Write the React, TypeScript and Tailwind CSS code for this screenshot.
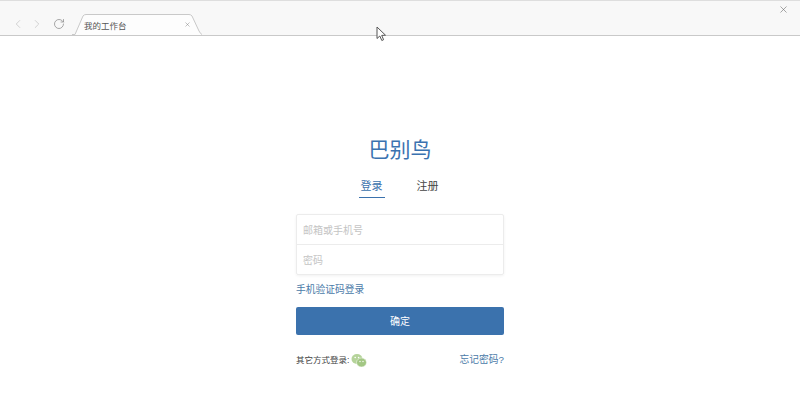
import { ChevronLeft, ChevronRight, RotateCw, X } from "lucide-react";

const cjk = "font-['Liberation_Sans','Noto_Sans_CJK_SC',sans-serif]";

function Tab() {
    return (
        <div className="relative h-[21px] w-[130px] shrink-0">
            {/* tab outline */}
            <svg className="absolute inset-0" width="130" height="21" viewBox="0 0 130 21" fill="none">
                <path d="M0 20.5 H3 L11 2 Q12 .5 14 .5 H117 Q119 .5 120 2 L127 17 Q129 20.5 130 20.5 V21 H0 Z" fill="#fdfdfd" />
                <path d="M0 20.5 H3 L11 2 Q12 .5 14 .5 H117 Q119 .5 120 2 L127 17 Q129 20.5 130 20.5" stroke="#c9c9c9" />
            </svg>
            <div className="relative flex h-full items-center pl-[12px] pr-[11px] pt-[3px]">
                <span className="flex-1 text-[8.5px] text-[#555]">我的工作台</span>
                <X size={7} strokeWidth={1.5} className="-translate-y-[2px] text-[#777]" />
            </div>
        </div>
    );
}

export default function App() {
    return (
        <div className={`relative h-[417px] w-[800px] overflow-hidden bg-white ${cjk}`}>
            {/* Browser bar */}
            <div className="flex h-[36px] items-end border-y border-t-[#dedede] border-b-[#c9c9c9] bg-[#f8f8f8] pl-[11px]">
                <div className="flex h-[21px] w-[61px] shrink-0 items-center gap-[5px] pb-[2px] pt-[1px]">
                    <ChevronLeft size={14} strokeWidth={1.25} className="text-[#c4c4c4]" />
                    <ChevronRight size={14} strokeWidth={1.25} className="text-[#c4c4c4]" />
                    <RotateCw size={12} strokeWidth={1.5} className="ml-[4px] text-[#8c8c8c]" />
                </div>
                <Tab />
                <div className="flex h-full flex-1 justify-end pr-[11px] pt-[3px]">
                    <X size={11} strokeWidth={1.25} className="text-[#666]" />
                </div>
            </div>

            {/* Login form */}
            <div className="mx-auto flex w-[208px] flex-col pt-[100px]">
                <h1 className="text-center text-[21px] leading-[28px] text-[#3a72b0]">巴别鸟</h1>

                <div className="mt-[14px] flex justify-center gap-[30px] pr-[1px] text-[11px]">
                    <div className="border-b border-[#3b72ad] px-[2px] pb-[2px] leading-[17px] text-[#3b72ad]">登录</div>
                    <div className="px-[2px] leading-[17px] text-[#444]">注册</div>
                </div>

                <div className="mt-[16px] rounded-[2px] border border-[#ececec] text-[10px] text-[#c4c4c4] shadow-[0_1px_3px_rgba(0,0,0,0.06)]">
                    <div className="flex h-[30px] items-center border-b border-[#ececec] pl-[6px] pt-[1px]">邮箱或手机号</div>
                    <div className="flex h-[29px] items-center pl-[6px] pt-[1px]">密码</div>
                </div>

                <a className="mt-[8px] text-[9.75px] leading-[14px] text-[#4a7aa8]">手机验证码登录</a>

                <button className="mt-[10px] h-[28px] rounded-[2px] bg-[#3b72ad] text-[10px] text-white">确定</button>

                <div className="mt-[16px] flex items-center justify-between text-[8.5px] leading-[18px]">
                    <div className="flex items-center gap-[2px] text-[#444]">
                        <span>其它方式登录:</span>
                        <svg width="16" height="15" viewBox="0 0 16 15">
                            <ellipse cx="6" cy="6" rx="5.5" ry="5" fill="#b5d39a" />
                            <ellipse cx="10.5" cy="9.5" rx="5" ry="4.5" fill="#a3c784" stroke="#fff" strokeWidth="0.5" />
                            <circle cx="4.2" cy="4.5" r=".8" fill="#fff" />
                            <circle cx="7.6" cy="4.5" r=".8" fill="#fff" />
                            <circle cx="9" cy="8.5" r=".7" fill="#fff" />
                            <circle cx="12" cy="8.5" r=".7" fill="#fff" />
                        </svg>
                    </div>
                    <a className="text-[9.75px] text-[#4a7aa8]">忘记密码?</a>
                </div>
            </div>

            {/* Mouse pointer */}
            <svg className="absolute left-[376px] top-[26px]" width="11" height="16" viewBox="0 0 11 16">
                <path d="M1 1 V12.5 L3.8 10 L5.8 14.5 L7.6 13.7 L5.7 9.4 L9.5 9.2 Z" fill="#fff" stroke="#555" strokeWidth="1" />
            </svg>
        </div>
    );
}
